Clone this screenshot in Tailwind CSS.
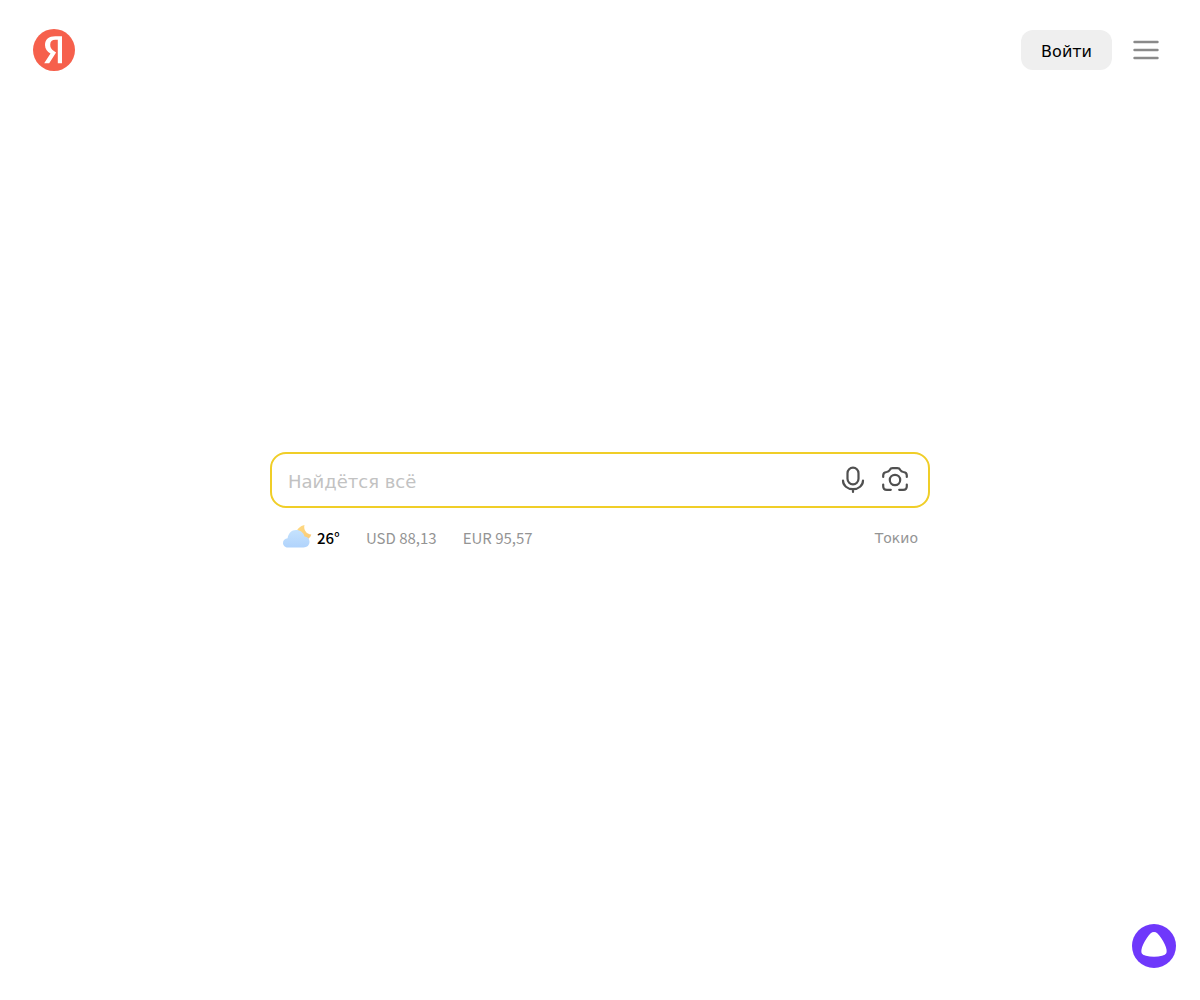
<!DOCTYPE html>
<html lang="ru">
<head>
<meta charset="utf-8">
<meta name="viewport" content="width=device-width, initial-scale=1">
<title>Яндекс</title>
<script src="https://cdn.jsdelivr.net/npm/@tailwindcss/browser@4"></script>
</head>
<body class="flex min-h-screen flex-col bg-white font-['DejaVu_Sans',sans-serif] text-black">
<header class="flex h-25 items-center justify-between pr-10 pl-8">
  <a href="#" aria-label="Яндекс">
    <svg class="size-11" viewBox="0 0 44 44">
      <circle cx="22" cy="22" r="21" fill="#f6604c"/>
      <path d="M25.800 11.800h-2.400c-3.400 0-5.200 1.700-5.200 5 0 2.900 1.200 4.600 3.700 6.300l2.200 1.400-6.900 10.700h-5l6.300-9.600c-3.300-2.300-5.500-4.700-5.500-8.700 0-5.300 3.700-8.700 10.300-8.700h6.700V35.200h-4.200z" fill="#fff"/>
    </svg>
  </a>
  <div class="flex items-center gap-5">
    <button type="button" class="h-10 rounded-xl bg-[#efefef] px-5 pt-1 text-base">Войти</button>
    <button type="button" aria-label="Меню">
      <svg class="size-7" viewBox="0 0 28 28" fill="none" stroke="#8a8a8a" stroke-width="2.400" stroke-linecap="round"><path d="M2.500 6h23M2.500 14h23M2.500 22h23"/></svg>
    </button>
  </div>
</header>
<main class="flex flex-1 flex-col items-center justify-center px-4 pb-24">
  <div class="w-full max-w-[660px]">
    <form class="flex h-14 items-center rounded-2xl border-2 border-[#f0ce28] pr-[17px] pl-4">
      <input type="text" aria-label="Поиск" placeholder="Найдётся всё" class="min-w-0 flex-1 bg-transparent pt-1 text-lg outline-none placeholder:text-[#c2c2c2]">
      <div class="flex items-center gap-2.5">
        <button type="button" aria-label="Голосовой поиск">
          <svg class="size-8" viewBox="0 0 32 32" fill="none" stroke="#505050" stroke-width="2.200" stroke-linecap="round"><rect x="10.500" y="3.700" width="11" height="16.600" rx="5.500"/><path d="M6 16.500c0 5 4.400 8.700 10 8.700s10-3.700 10-8.700M16 25.200v2.800"/></svg>
        </button>
        <button type="button" aria-label="Поиск по картинке">
          <svg class="size-8" viewBox="0 0 32 32" fill="none" stroke="#505050" stroke-width="2.200" stroke-linecap="round" stroke-linejoin="round"><circle cx="16" cy="16" r="5.200"/><path d="M4.200 13v-1.500c0-2.200 1-3.300 3.300-3.500 1.800-.2 2.500-.7 3.200-2 .7-1.400 1.200-1.800 2.900-1.800h4.800c1.700 0 2.200.4 2.900 1.800.7 1.300 1.400 1.800 3.200 2 2.300.2 3.300 1.300 3.300 3.500V13M4.200 20.500v1.700c0 2.500 1.100 3.600 3.600 3.600h4M27.800 20.500v1.700c0 2.500-1.100 3.600-3.600 3.600h-4"/></svg>
        </button>
      </div>
    </form>
    <div class="flex h-11 items-center px-3 pt-3.5 font-['Noto_Sans_CJK_JP',sans-serif] text-[15px] text-[#949494]">
      <a href="#" class="mr-[26px] flex items-center gap-[3px] font-medium text-black">
        <svg class="size-8" viewBox="0 0 32 32">
          <defs>
            <linearGradient id="cloud" x1="0" y1="0" x2="0" y2="1"><stop stop-color="#c5e2fd"/><stop offset="1" stop-color="#b0d3fc"/></linearGradient>
            <linearGradient id="moon" x1="0" y1="0" x2="1" y2="1"><stop stop-color="#ffdb82"/><stop offset="1" stop-color="#f9c978"/></linearGradient>
          </defs>
          <path d="M22.500 4c-1.400 4.300 2 9.500 6.800 9.500-1 3.700-4 5.500-7.500 5.500-4.500 0-7.300-3.200-7.300-7 0-3.600 3.700-7.300 8-8z" fill="url(#moon)"/>
          <path d="M6 26.500c-2.800 0-5-1.800-5-4.500s2-4.600 4.600-4.700C6.300 12.500 9.600 9 14 9c4.300 0 7.600 2.500 8.500 6.400 3 .2 5 2.300 5 5.400 0 3.500-2.400 5.700-6 5.700z" fill="url(#cloud)"/>
        </svg>
        <span class="pt-0.5">26°</span>
      </a>
      <a href="#" class="mr-[26px] pt-0.5">USD 88,13</a>
      <a href="#" class="pt-0.5">EUR 95,57</a>
      <a href="#" class="ml-auto pt-0.5 font-['DejaVu_Sans',sans-serif] text-sm">Токио</a>
    </div>
  </div>
</main>
<button type="button" aria-label="Алиса" class="fixed right-6 bottom-8">
  <svg class="size-11" viewBox="0 0 44 44"><circle cx="22" cy="22" r="22" fill="#6f38fb"/><path d="M22 8c2.500 0 4.500 1.900 7.300 6.300 2.700 4.200 4.700 8.300 5.200 11.300.6 3.800-.6 5.300-4.400 6.200-2.500.6-5.100.9-8.100.9s-5.600-.3-8.100-.9c-3.800-.9-5-2.400-4.400-6.200.5-3 2.500-7.100 5.200-11.300C17.500 9.900 19.500 8 22 8z" fill="#fff"/></svg>
</button>
</body>
</html>
